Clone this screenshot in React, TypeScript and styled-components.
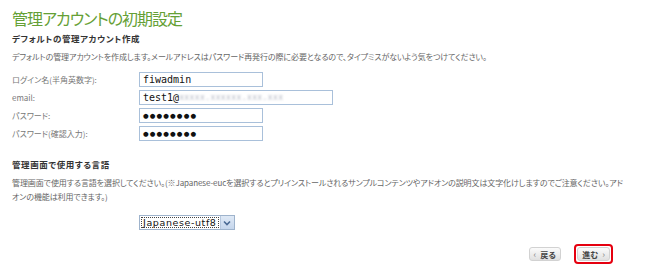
import React from "react";
import styled, { createGlobalStyle } from "styled-components";

const Global = createGlobalStyle`
  html, body { margin: 0; padding: 0; background: #fff; }
  body {
    font-family: "Noto Sans CJK JP", "Liberation Sans", sans-serif;
    font-feature-settings: "palt";
    color: #555;
    width: 645px;
    height: 272px;
    overflow: hidden;
  }
`;

const Page = styled.div`
  padding: 7px 20px 0 12px;
  width: 645px;
  box-sizing: border-box;
`;

const Title = styled.h1`
  margin: 0;
  font-size: 16px;
  font-weight: 400;
  color: #65a035;
  letter-spacing: -1px;
  line-height: 22px;
`;

const SectionHead = styled.h2<{ $top: number }>`
  margin: ${(p) => p.$top}px 0 0;
  font-size: 8.5px;
  font-weight: 700;
  color: #333;
  line-height: 14px;
  letter-spacing: 0.6px;
`;

const Desc = styled.p`
  margin: 5px 0 0;
  font-size: 8px;
  line-height: 14px;
  color: #666;
  letter-spacing: -0.1px;
`;

const Form = styled.div`
  display: grid;
  grid-template-columns: 127px auto;
  row-gap: 3px;
  margin-top: 8px;
  align-items: center;
`;

const Label = styled.label`
  font-size: 8px;
  color: #777;
  line-height: 15px;
`;

const Field = styled.div<{ $w: number }>`
  width: ${(p) => p.$w}px;
  height: 15px;
  box-sizing: border-box;
  border: 1px solid #a9c0da;
  background: #fff;
  display: flex;
  align-items: center;
  padding-left: 3px;
  font-family: "DejaVu Sans Mono", monospace;
  font-size: 10px;
  color: #111;
  overflow: hidden;
  white-space: nowrap;
`;

const Dots = styled.span`
  font-family: "DejaVu Sans", sans-serif;
  font-size: 6.5px;
  letter-spacing: 1.1px;
  color: #111;
`;

const Blur = styled.span`
  filter: blur(1.2px);
  color: #b4b8c4;
  font-size: 8px;
  letter-spacing: 0.4px;
`;

const SelectRow = styled.div`
  margin-top: 11px;
  padding-left: 127px;
  display: flex;
`;

const Select = styled.div`
  display: flex;
  height: 15px;
  border: 1px solid #9eb3cc;
  background: #fff;
  box-sizing: border-box;
`;

const SelectText = styled.span`
  outline: 1px dotted #444;
  outline-offset: -2px;
  font-family: "DejaVu Sans", sans-serif;
  font-size: 9.5px;
  letter-spacing: 0.6px;
  color: #111;
  padding: 0 3px;
  line-height: 13px;
`;

const Arrow = styled.span`
  width: 13px;
  height: 13px;
  background: linear-gradient(#dfe9f6, #c5d6ec);
  border-left: 1px solid #b7c8de;
  display: flex;
  align-items: center;
  justify-content: center;
`;

const Buttons = styled.div`
  display: flex;
  justify-content: flex-end;
  align-items: center;
  gap: 10px;
  margin-top: 14px;
  padding-right: 12px;
`;

const Ring = styled.div<{ $on?: boolean }>`
  border: 2px solid ${(p) => (p.$on ? "#e5000f" : "transparent")};
  border-radius: 4px;
  padding: 1px;
  display: flex;
`;

const Btn = styled.button`
  height: 14px;
  padding: 0 4px;
  border: 1px solid #d2d2d2;
  border-radius: 3px;
  background: linear-gradient(#fbfbfb, #e0e0e0);
  font-family: "Noto Sans CJK JP", sans-serif;
  font-size: 8px;
  font-weight: 700;
  color: #444;
  display: flex;
  align-items: center;
  gap: 4px;
  cursor: pointer;
`;

const Chev = styled.span`
  color: #888;
  font-size: 9px;
  font-weight: 400;
`;

export default function App() {
  return (
    <>
      <Global />
      <Page>
        <Title>管理アカウントの初期設定</Title>
        <SectionHead $top={2}>デフォルトの管理アカウント作成</SectionHead>
        <Desc>
          デフォルトの管理アカウントを作成します。メールアドレスはパスワード再発行の際に必要となるので、タイプミスがないよう気をつけてください。
        </Desc>
        <Form>
          <Label>ログイン名(半角英数字):</Label>
          <Field $w={124}>fiwadmin</Field>
          <Label>email:</Label>
          <Field $w={194}>
            test1@<Blur>xxxxx.xxxxxx.xxx.xxx</Blur>
          </Field>
          <Label>パスワード:</Label>
          <Field $w={124}>
            <Dots>●●●●●●●●</Dots>
          </Field>
          <Label>パスワード(確認入力):</Label>
          <Field $w={124}>
            <Dots>●●●●●●●●</Dots>
          </Field>
        </Form>
        <SectionHead $top={16}>管理画面で使用する言語</SectionHead>
        <Desc>
          管理画面で使用する言語を選択してください。(※Japanese-eucを選択するとプリインストールされるサンプルコンテンツやアドオンの説明文は文字化けしますのでご注意ください。アドオンの機能は利用できます。)
        </Desc>
        <SelectRow>
          <Select>
            <SelectText>Japanese-utf8</SelectText>
            <Arrow>
              <svg width="8" height="6" viewBox="0 0 8 6">
                <path d="M1 1.5 L4 4.5 L7 1.5" fill="none" stroke="#4a6a94" strokeWidth="1.6" />
              </svg>
            </Arrow>
          </Select>
        </SelectRow>
        <Buttons>
          <Ring>
            <Btn>
              <Chev>‹</Chev>戻る
            </Btn>
          </Ring>
          <Ring $on>
            <Btn>
              進む<Chev>›</Chev>
            </Btn>
          </Ring>
        </Buttons>
      </Page>
    </>
  );
}
